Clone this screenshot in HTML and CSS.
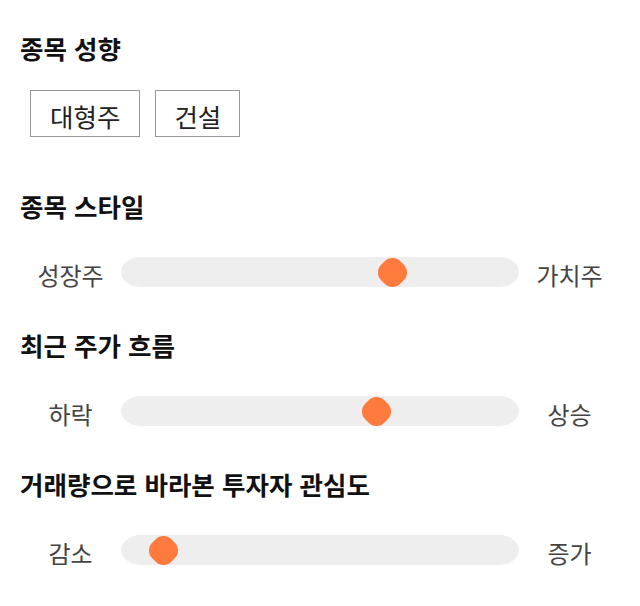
FILE: index.html
```html
<!DOCTYPE html>
<html lang="ko">
<head>
<meta charset="utf-8">
<link rel="stylesheet" href="styles.css">
</head>
<body>
<div class="page">
  <section class="section section-tags">
    <h2 class="title">종목 성향</h2>
    <div class="tags">
      <span class="tag">대형주</span>
      <span class="tag">건설</span>
    </div>
  </section>
  <section class="section">
    <h2 class="title">종목 스타일</h2>
    <div class="slider-row">
      <span class="label">성장주</span>
      <div class="track"><span class="thumb" style="left: 68.1%"></span></div>
      <span class="label">가치주</span>
    </div>
  </section>
  <section class="section">
    <h2 class="title">최근 주가 흐름</h2>
    <div class="slider-row">
      <span class="label">하락</span>
      <div class="track"><span class="thumb" style="left: 64.3%"></span></div>
      <span class="label">상승</span>
    </div>
  </section>
  <section class="section">
    <h2 class="title">거래량으로 바라본 투자자 관심도</h2>
    <div class="slider-row">
      <span class="label">감소</span>
      <div class="track"><span class="thumb" style="left: 10.8%"></span></div>
      <span class="label">증가</span>
    </div>
  </section>
</div>
</body>
</html>
```
FILE: styles.css
```css
* { box-sizing: border-box; }
html, body { margin: 0; padding: 0; background: #fff; }
body {
  font-family: "Noto Sans CJK KR", "Noto Sans", sans-serif;
  color: #111;
}
.page {
  padding: 32px 20px 40px 20px;
}
.section { margin-top: 45px; }
.section:first-child { margin-top: 0; }
.section-tags { padding-bottom: 8px; }
.title {
  margin: 0;
  font-size: 25.5px;
  font-weight: 700;
  line-height: 32px;
  height: 32px;
  color: #111;
}
.tags {
  display: flex;
  gap: 15px;
  margin-top: 26px;
  padding-left: 10px;
}
.tag {
  display: block;
  height: 47px;
  padding: 6px 18px 0 18px;
  border: 1px solid #999;
  font-size: 25.5px;
  line-height: 38px;
  color: #222;
}
.tag:first-child { padding: 6px 19px 0 19px; }
.slider-row {
  display: grid;
  grid-template-columns: 101px 1fr 101px;
  align-items: center;
  margin-top: 32px;
  height: 30px;
}
.label {
  text-align: center;
  font-size: 24px;
  line-height: 30px;
  color: #444;
  padding-top: 6px;
}
.track {
  position: relative;
  height: 30px;
  background: #eeeeee;
  border-radius: 20px / 15px;
}
.thumb {
  position: absolute;
  top: 50%;
  width: 27px;
  height: 27px;
  margin-left: -13.5px;
  margin-top: -13.5px;
  background: #ff7a3d;
  border-radius: 11px;
  transform: rotate(45deg);
}
```
